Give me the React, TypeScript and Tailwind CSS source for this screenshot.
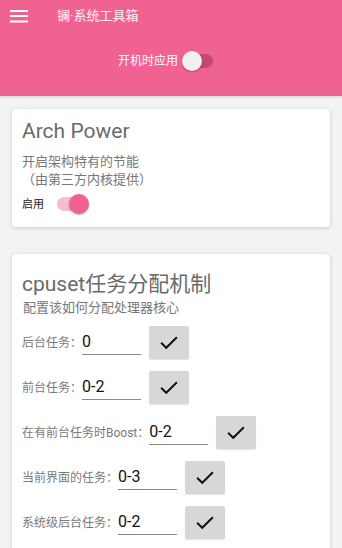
import React from 'react';

const font = { fontFamily: 'Roboto, "Noto Sans CJK SC", sans-serif' };

function CheckButton() {
  return (
    <button className="ml-[8px] flex h-[33px] w-[40px] items-center justify-center rounded-[2px] bg-[#d6d7d6] shadow-[0_1px_1px_rgba(0,0,0,0.12)]">
      <svg width="22" height="22" viewBox="0 0 24 24" fill="none">
        <path d="M4.2 12.6 9 17.2 19.8 6.6" stroke="#111" strokeWidth="2.2" strokeLinecap="square" />
      </svg>
    </button>
  );
}

function CpuRow({ label, value }: { label: string; value: string }) {
  return (
    <div className="flex h-[33px] items-center">
      <span className="text-[12px] leading-none text-[#7a7a7a]">{label}</span>
      <div className="flex h-[25px] w-[59px] items-center border-b-[1.5px] border-[#8a8a8a] text-[16px] leading-none text-[#111]">
        {value}
      </div>
      <CheckButton />
    </div>
  );
}

export default function App() {
  const rows = [
    { label: '后台任务：', value: '0' },
    { label: '前台任务：', value: '0-2' },
    { label: '在有前台任务时Boost：', value: '0-2' },
    { label: '当前界面的任务：', value: '0-3' },
    { label: '系统级后台任务：', value: '0-2' },
  ];

  return (
    <div className="h-[548px] w-full overflow-hidden bg-[#f3f3f3]" style={font}>
      {/* HEADER */}
      <header className="h-[96px] bg-[#f06292] shadow-[0_1px_3px_rgba(0,0,0,0.15)]">
        <div className="flex h-[31px] items-center pl-[10px]">
          <svg width="18" height="14" viewBox="0 0 18 14">
            <rect x="0" y="1" width="18" height="2" fill="#fff" />
            <rect x="0" y="6" width="18" height="2" fill="#fff" />
            <rect x="0" y="11.5" width="18" height="2" fill="#fff" />
          </svg>
          <span className="ml-[29px] text-[13px] text-white/90">镧·系统工具箱</span>
        </div>
        <div className="mt-[19px] flex items-center pl-[118px]">
          <span className="text-[12px] leading-none text-white">开机时应用</span>
          <div className="relative ml-[4px] h-[22px] w-[32px]">
            <div className="absolute left-[3px] top-[4px] h-[14px] w-[28px] rounded-full bg-[#c2497a]" />
            <div className="absolute left-0 top-[1px] h-[20px] w-[20px] rounded-full bg-[#f1f1f1] shadow-[0_1px_2px_rgba(0,0,0,0.3)]" />
          </div>
        </div>
      </header>

      {/* ARCH POWER CARD */}
      <section className="mx-[12px] mt-[13px] rounded-[4px] bg-white px-[10px] pb-[13px] pt-[8px] shadow-[0_1px_4px_rgba(0,0,0,0.18)]">
        <h2 className="text-[21px] leading-[28px] text-[#6a6a6a]">Arch Power</h2>
        <p className="mt-[8px] text-[13px] leading-[18px] text-[#777]">
          开启架构特有的节能
          <br />
          （由第三方内核提供）
        </p>
        <div className="mt-[5px] flex h-[20px] items-center">
          <span className="text-[11px] leading-none text-[#222]">启用</span>
          <div className="relative ml-[13px] h-[22px] w-[32px]">
            <div className="absolute left-0 top-[4px] h-[14px] w-[28px] rounded-full bg-[#f8bbd0]" />
            <div className="absolute left-[12px] top-[1px] h-[20px] w-[20px] rounded-full bg-[#f06292] shadow-[0_1px_2px_rgba(0,0,0,0.3)]" />
          </div>
        </div>
      </section>

      {/* CPUSET CARD */}
      <section className="mx-[12px] mt-[27px] h-[320px] rounded-[4px] bg-white px-[10px] pt-[16px] shadow-[0_1px_4px_rgba(0,0,0,0.18)]">
        <h2 className="text-[21px] leading-[28px] text-[#6a6a6a]">cpuset任务分配机制</h2>
        <p className="mt-[1px] pl-[1px] text-[13px] leading-[18px] text-[#777]">配置该如何分配处理器核心</p>
        <div className="mt-[9px] flex flex-col gap-[12px]">
          {rows.map((r) => (
            <CpuRow key={r.label} label={r.label} value={r.value} />
          ))}
        </div>
      </section>
    </div>
  );
}
